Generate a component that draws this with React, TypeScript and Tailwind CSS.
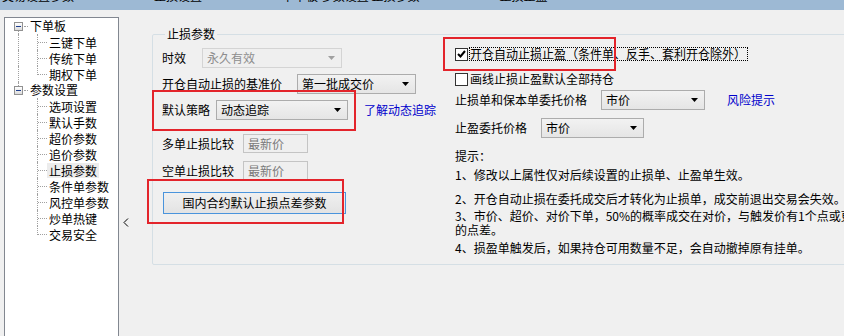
import React from 'react'

type TreeGroup = { title: string; items: string[] }

const tree: TreeGroup[] = [
  { title: '下单板', items: ['三键下单', '传统下单', '期权下单'] },
  {
    title: '参数设置',
    items: ['选项设置', '默认手数', '超价参数', '追价参数', '止损参数', '条件单参数', '风控单参数', '炒单热键', '交易安全'],
  },
]

const dots = 'border-dotted border-[#a0a0a0]'

function Arrow({ disabled }: { disabled?: boolean }) {
  return (
    <svg width="7" height="4" viewBox="0 0 7 4">
      <path d="M0 0h7L3.5 4z" fill={disabled ? '#a0a0a0' : '#000'} />
    </svg>
  )
}

function Combo({ value, className, disabled }: { value: string; className: string; disabled?: boolean }) {
  return (
    <div
      className={`flex h-[20px] shrink-0 items-center justify-between border pr-[6px] pl-[4px] ${
        disabled
          ? 'border-[#d4d4d4] bg-[#efefef] text-[#8d8d8d]'
          : 'border-[#acacac] bg-gradient-to-b from-[#f2f2f2] to-[#e5e5e5] text-black'
      } ${className}`}
    >
      <span>{value}</span>
      <Arrow disabled={disabled} />
    </div>
  )
}

function ReadOnlyBox({ value }: { value: string }) {
  return (
    <div className="flex h-[19px] w-[65px] items-center border border-[#c4c4c4] bg-[#efefef] pl-[4px] text-[#7a7a7a]">
      {value}
    </div>
  )
}

function CheckBox({ checked }: { checked?: boolean }) {
  return (
    <div className="flex h-[13px] w-[13px] shrink-0 items-center justify-center border border-[#333] bg-white">
      {checked && (
        <svg width="9" height="8" viewBox="0 0 9 8">
          <path d="M1 4l2.5 2.5L8 1" stroke="#000" strokeWidth="2" fill="none" />
        </svg>
      )}
    </div>
  )
}

function Tree() {
  return (
    <div className="h-[330px] w-[115px] shrink-0 border border-[#828790] bg-white">
      {tree.map((group, gi) => {
        const lastGroup = gi === tree.length - 1
        return (
          <div key={group.title}>
            <div className="flex h-[16px] items-center">
              <div className="relative h-full w-[23px] shrink-0">
                {gi > 0 && <div className={`absolute top-0 left-[13px] h-[4px] border-l ${dots}`} />}
                {!lastGroup && <div className={`absolute top-[13px] left-[13px] h-[3px] border-l ${dots}`} />}
                <div className="absolute top-[4px] left-[9px] flex h-[9px] w-[9px] items-center justify-center border border-[#919191] bg-gradient-to-b from-white to-[#dcdcdc]">
                  <div className="h-[1px] w-[5px] bg-[#1e3e8e]" />
                </div>
                <div className={`absolute top-[8px] left-[19px] w-[4px] border-t ${dots}`} />
              </div>
              <span className="pl-[2px]">{group.title}</span>
            </div>
            {group.items.map((item, ii) => {
              const lastItem = ii === group.items.length - 1
              const active = item === '止损参数'
              return (
                <div key={item} className="flex h-[16px] items-center">
                  <div className="relative h-full w-[24px] shrink-0">
                    {!lastGroup && <div className={`absolute top-0 left-[13px] h-full border-l ${dots}`} />}
                  </div>
                  <div className="relative h-full w-[18px] shrink-0">
                    <div className={`absolute top-0 left-[8px] border-l ${dots} ${lastItem ? 'h-[9px]' : 'h-full'}`} />
                    <div className={`absolute top-[8px] left-[9px] w-[9px] border-t ${dots}`} />
                  </div>
                  <span className={`px-[2px] leading-[15px] ${active ? 'bg-[#ececec]' : ''}`}>{item}</span>
                </div>
              )
            })}
          </div>
        )
      })}
    </div>
  )
}

export default function App() {
  return (
    <div className="relative h-[336px] w-[844px] overflow-hidden bg-[#f0f0f0] font-[Noto_Sans_CJK_SC,sans-serif] text-[12px] leading-[16px] text-black">
      <div className="h-[10px] overflow-hidden bg-[#9db9d4]">
        <div className="-mt-[12px] flex gap-[80px] pl-[2px] whitespace-nowrap">
          <span>交易设置参数</span>
          <span>止损设置</span>
          <span>下单板 参数设置 止损参数</span>
          <span>止损止盈</span>
        </div>
      </div>

      <div className="flex pt-[7px]">
        <div className="pl-[4px]">
          <Tree />
        </div>

        <div className="w-[33px] shrink-0 pt-[201px] pl-[4px]">
          <svg width="6" height="9" viewBox="0 0 6 9">
            <path d="M5 0.5L1 4.5l4 4" stroke="#000" strokeWidth="1" fill="none" />
          </svg>
        </div>

        <fieldset className="mt-[9px] h-[239px] w-[720px] shrink-0 rounded-[2px] border border-[#d5dfe5] pl-[9px]">
          <legend className="ml-[3px] px-[2px] leading-[16px]">止损参数</legend>
          <div className="flex">
            <div className="flex w-[293px] shrink-0 flex-col">
              <div className="mt-[6px] flex items-center">
                <span className="w-[40px]">时效</span>
                <Combo value="永久有效" className="w-[140px]" disabled />
              </div>
              <div className="mt-[6px] flex items-center">
                <span className="w-[135px]">开仓自动止损的基准价</span>
                <Combo value="第一批成交价" className="w-[119px]" />
              </div>
              <div className="mt-[6px] flex items-center">
                <span className="w-[54px]">默认策略</span>
                <Combo value="动态追踪" className="w-[132px]" />
                <span className="ml-[16px] whitespace-nowrap text-[#0000cc]">了解动态追踪</span>
              </div>
              <div className="mt-[14px] flex items-center">
                <span className="w-[81px]">多单止损比较</span>
                <ReadOnlyBox value="最新价" />
              </div>
              <div className="mt-[8px] flex items-center">
                <span className="w-[81px]">空单止损比较</span>
                <ReadOnlyBox value="最新价" />
              </div>
              <button className="mt-[12px] ml-[1px] h-[22px] w-[183px] border border-[#4a94dc] bg-gradient-to-b from-[#f0f0f0] to-[#e3e3e3] text-[12px]">
                国内合约默认止损点差参数
              </button>
            </div>

            <div className="flex flex-col">
              <div className="mt-[5px] flex h-[14px] items-center">
                <CheckBox checked />
                <span className="ml-[1px] border border-dotted border-black pr-[1px] leading-[12px] whitespace-nowrap">
                  开仓自动止损止盈（条件单、反手、套利开仓除外）
                </span>
              </div>
              <div className="mt-[11px] flex h-[14px] items-center">
                <CheckBox />
                <span className="ml-[2px]">画线止损止盈默认全部持仓</span>
              </div>
              <div className="mt-[4px] flex items-center">
                <span className="w-[146px]">止损单和保本单委托价格</span>
                <Combo value="市价" className="w-[104px]" />
                <span className="ml-[22px] text-[#0000cc]">风险提示</span>
              </div>
              <div className="mt-[8px] flex items-center">
                <span className="w-[86px]">止盈委托价格</span>
                <Combo value="市价" className="w-[103px]" />
              </div>
              <p className="mt-[10px]">提示：</p>
              <p className="mt-[3px] whitespace-nowrap">1、修改以上属性仅对后续设置的止损单、止盈单生效。</p>
              <p className="mt-[8px] whitespace-nowrap">2、开仓自动止损在委托成交后才转化为止损单，成交前退出交易会失效。</p>
              <p className="mt-[2px] leading-[14px] whitespace-nowrap">
                3、市价、超价、对价下单，50%的概率成交在对价，与触发价有1个点或更大
                <br />
                的点差。
              </p>
              <p className="mt-[3px] whitespace-nowrap">4、损盈单触发后，如果持仓可用数量不足，会自动撤掉原有挂单。</p>
            </div>
          </div>
        </fieldset>
      </div>

      <div className="pointer-events-none absolute top-[90px] left-[152px] h-[41px] w-[204px] border-2 border-[#e3242b]" />
      <div className="pointer-events-none absolute top-[179px] left-[147px] h-[45px] w-[197px] border-2 border-[#e3242b]" />
      <div className="pointer-events-none absolute top-[37px] left-[443px] h-[34px] w-[173px] border-2 border-[#e3242b]" />
    </div>
  )
}
